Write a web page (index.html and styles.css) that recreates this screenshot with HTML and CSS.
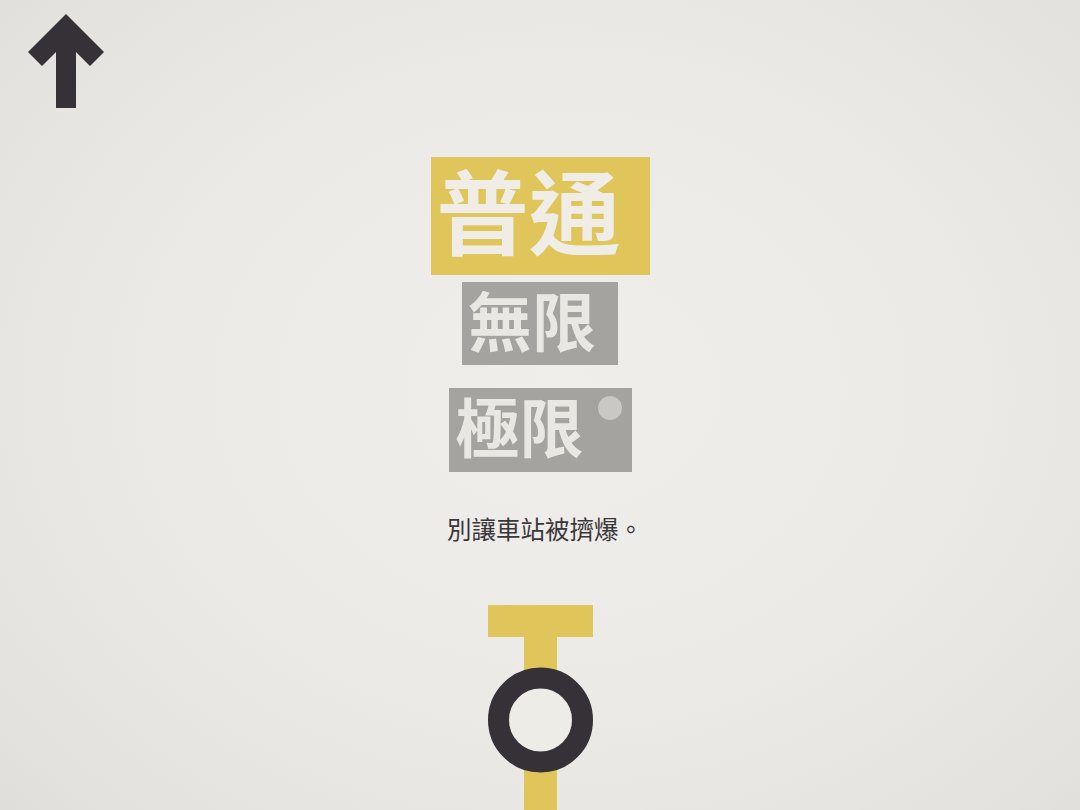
FILE: index.html
```html
<!DOCTYPE html>
<html lang="zh-Hant">
<head>
<meta charset="utf-8">
<title>模式選擇</title>
<link rel="stylesheet" href="styles.css">
</head>
<body>
<div class="screen">
  <header class="top">
    <svg class="back" width="80" height="96" viewBox="0 0 80 96" aria-label="返回">
      <polygon points="38,0 76,38 62,52 48,38 48,94 28,94 28,38 14,52 0,38" fill="#353136"/>
    </svg>
  </header>
  <main class="menu">
    <div class="mode mode-normal">普通</div>
    <div class="mode mode-endless">無限</div>
    <div class="mode mode-extreme">極限<span class="dot"></span></div>
    <p class="caption">別讓車站被擠爆。</p>
  </main>
  <footer class="station">
    <svg width="106" height="205" viewBox="0 0 106 205">
      <rect x="0" y="0" width="105" height="32" fill="#e0c55b"/>
      <rect x="36" y="0" width="33" height="205" fill="#e0c55b"/>
      <circle cx="52.5" cy="115" r="42" fill="#eeece7" stroke="#353136" stroke-width="21"/>
    </svg>
  </footer>
</div>
</body>
</html>
```

FILE: styles.css
```css
html, body {
  margin: 0;
  padding: 0;
}
body {
  width: 1080px;
  height: 810px;
  overflow: hidden;
  font-family: "Noto Sans CJK TC", "Noto Sans CJK SC", sans-serif;
}
.screen {
  width: 1080px;
  height: 810px;
  display: flex;
  flex-direction: column;
  background: radial-gradient(ellipse 75% 80% at 52% 48%, #efeeea 0%, #ebeae6 50%, #e3e2de 85%, #dddcd8 100%);
}
.top {
  padding: 14px 0 0 28px;
  height: 94px;
}
.back {
  display: block;
}
.menu {
  display: flex;
  flex-direction: column;
  align-items: center;
  margin-top: 49px;
}
.mode {
  font-weight: 700;
  line-height: 1;
  color: #f0ede6;
  display: flex;
  align-items: flex-start;
  box-sizing: border-box;
}
.mode-normal {
  background: #e0c55b;
  font-size: 92px;
  width: 219px;
  height: 118px;
  padding: 5px 0 0 6px;
  white-space: nowrap;
}
.mode-endless {
  background: #a4a39f;
  color: #e9e7e1;
  font-size: 64px;
  width: 156px;
  height: 83px;
  padding: 4px 0 0 6px;
  margin-top: 7px;
}
.mode-extreme {
  background: #a4a39f;
  color: #e9e7e1;
  font-size: 64px;
  width: 183px;
  height: 84px;
  padding: 4px 0 0 7px;
  margin-top: 23px;
}
.dot {
  width: 24px;
  height: 24px;
  border-radius: 50%;
  background: #c9c8c4;
  margin: 4px 0 0 14px;
}
.caption {
  margin: 40px 0 0 10px;
  font-size: 24.5px;
  line-height: 34px;
  color: #3a373a;
  font-weight: 400;
}
.station {
  margin-top: auto;
  display: flex;
  justify-content: center;
  padding-left: 1px;
}
.station svg {
  display: block;
}
```
